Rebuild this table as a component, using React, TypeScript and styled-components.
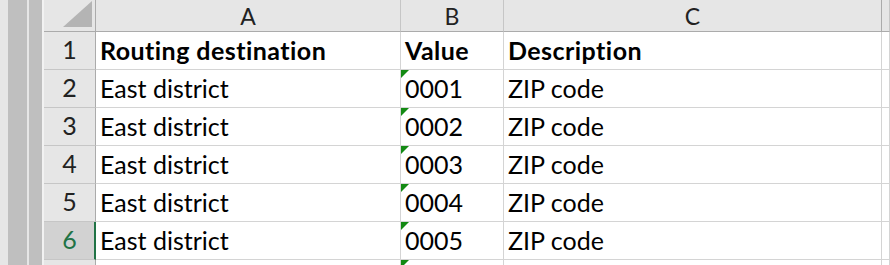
import React from 'react';
import styled, { createGlobalStyle } from 'styled-components';

const GlobalStyle = createGlobalStyle`
  html, body {
    margin: 0;
    padding: 0;
    background: #ffffff;
    overflow: hidden;
  }
  body {
    font-family: Lato, "Liberation Sans", sans-serif;
  }
`;

const Page = styled.div`
  display: flex;
  width: 890px;
  height: 265px;
  overflow: hidden;
  background: #ffffff;
`;

const OutlineStrip = styled.div`
  display: flex;
  flex: 0 0 44px;
  height: 100%;
  padding-left: 8px;
  box-sizing: border-box;
  gap: 2px;
  background: #e6e6e6;
  border-right: 2px solid #f2f2f2;
`;

const OutlineBar = styled.div<{ $w: number }>`
  width: ${(p) => p.$w}px;
  height: 100%;
  background: #bfbfbf;
`;

const Sheet = styled.div`
  flex: 1;
  display: grid;
  grid-template-columns: 52px 305px 103px 378px 1fr;
  grid-template-rows: 32px repeat(7, 38px);
  align-content: start;
`;

const Corner = styled.div`
  background: #e6e6e6;
  border-right: 1px solid #ababab;
  border-bottom: 1px solid #ababab;
  box-sizing: border-box;
  display: flex;
  justify-content: flex-end;
  align-items: flex-start;
  padding: 1px 3px 0 0;
`;

const ColHeader = styled.div<{ $last?: boolean }>`
  background: #e6e6e6;
  border-right: 1px solid ${(p) => (p.$last ? '#ababab' : '#c6c6c6')};
  border-bottom: 1px solid #ababab;
  box-sizing: border-box;
  display: flex;
  align-items: center;
  justify-content: center;
  font-size: 23px;
  color: #222222;
  padding-top: 1px;
`;

const RowHeader = styled.div<{ $active?: boolean }>`
  background: ${(p) => (p.$active ? '#d2d2d2' : '#e6e6e6')};
  border-right: ${(p) => (p.$active ? '2px solid #217346' : '1px solid #ababab')};
  border-bottom: 1px solid #c6c6c6;
  box-sizing: border-box;
  display: flex;
  align-items: flex-end;
  justify-content: center;
  padding-bottom: 5px;
  padding-left: ${(p) => (p.$active ? '1px' : '0')};
  font-size: 25px;
  color: ${(p) => (p.$active ? '#217346' : '#222222')};
`;

const Cell = styled.div<{ $bold?: boolean; $flag?: boolean }>`
  position: relative;
  border-right: 1px solid #d4d4d4;
  border-bottom: 1px solid #d4d4d4;
  box-sizing: border-box;
  display: flex;
  align-items: flex-end;
  padding: 0 0 4px 4px;
  font-size: 25px;
  font-weight: ${(p) => (p.$bold ? 700 : 400)};
  letter-spacing: ${(p) => (p.$bold ? '0.45px' : '0')};
  color: #000000;
  white-space: nowrap;
  overflow: hidden;

  ${(p) =>
    p.$flag &&
    `&::before {
      content: '';
      position: absolute;
      left: 0;
      top: 0;
      width: 0;
      height: 0;
      border-top: 8px solid #138a13;
      border-right: 8px solid transparent;
    }`}
`;

const CornerTriangle = () => (
  <svg width="29" height="26" viewBox="0 0 29 26">
    <polygon points="29,0 29,26 0,26" fill="#b4b4b4" />
  </svg>
);

const values = ['0001', '0002', '0003', '0004', '0005'];

export default function App() {
  return (
    <>
      <GlobalStyle />
      <Page>
        <OutlineStrip>
          <OutlineBar $w={19} />
          <OutlineBar $w={13} />
        </OutlineStrip>
        <Sheet>
          <Corner>
            <CornerTriangle />
          </Corner>
          <ColHeader>A</ColHeader>
          <ColHeader>B</ColHeader>
          <ColHeader $last>C</ColHeader>
          <ColHeader />

          <RowHeader>1</RowHeader>
          <Cell $bold>Routing destination</Cell>
          <Cell $bold>Value</Cell>
          <Cell $bold>Description</Cell>
          <Cell />

          {values.map((value, i) => (
            <React.Fragment key={value}>
              <RowHeader $active={i === 4}>{i + 2}</RowHeader>
              <Cell>East district</Cell>
              <Cell $flag>{value}</Cell>
              <Cell>ZIP code</Cell>
              <Cell />
            </React.Fragment>
          ))}

          <RowHeader />
          <Cell />
          <Cell $flag />
          <Cell />
          <Cell />
        </Sheet>
      </Page>
    </>
  );
}
